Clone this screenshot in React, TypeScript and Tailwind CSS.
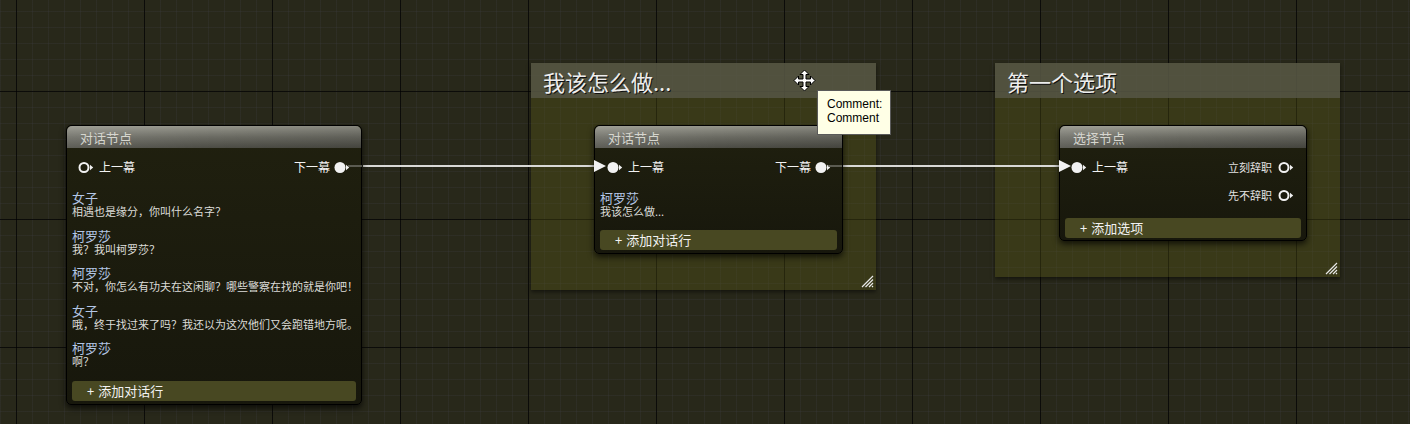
import React from "react";

const CJK = "font-['Noto_Sans_CJK_SC','Noto_Sans',sans-serif]";

function PinIcon({ filled }: { filled: boolean }) {
  return (
    <svg width="16" height="13" viewBox="0 0 16 13" className="shrink-0 block">
      {filled ? (
        <circle cx="6" cy="6.5" r="5.5" fill="#f2f2f2" />
      ) : (
        <circle cx="6" cy="6.5" r="4.5" fill="none" stroke="#f2f2f2" strokeWidth="2" />
      )}
      <path d="M12 3.8 L15.2 6.5 L12 9.2 Z" fill="#f2f2f2" />
    </svg>
  );
}

function NodeHeader({ title }: { title: string }) {
  return (
    <div className="relative h-[22px] rounded-t-[5px] bg-gradient-to-b from-[#95958b] via-[#6a6a62] to-[#4b4b44] flex items-center pl-[13px] overflow-hidden">
      <div className="absolute inset-0 bg-gradient-to-r from-white/10 via-transparent to-black/10" />
      <span className={`relative text-[13px] leading-none text-[#d6d6cf] ${CJK}`}>{title}</span>
    </div>
  );
}

function AddButton({ label }: { label: string }) {
  return (
    <div className={`mx-[5px] h-[20px] rounded-[3px] bg-[#484822] flex items-center pl-[15px] text-[13px] text-[#f2f2f2] ${CJK}`}>
      <span className="mr-[4px]">+</span>
      <span>{label}</span>
    </div>
  );
}

function Entry({ name, line }: { name: string; line: string }) {
  return (
    <div className="flex flex-col">
      <div className={`text-[13px] leading-[14px] text-[#b3c6e6] ${CJK}`}>{name}</div>
      <div className={`text-[11px] leading-[13.5px] text-[#dcdcd8] whitespace-nowrap ${CJK}`}>{line}</div>
    </div>
  );
}

function ResizeGrip() {
  return (
    <svg width="13" height="13" viewBox="0 0 13 13" className="absolute right-[2px] bottom-[2px]">
      <path d="M12 1 L1 12 M12 4.5 L4.5 12 M12 8 L8 12 M12 11 L11 12" stroke="#e8e8e8" strokeWidth="1.2" />
    </svg>
  );
}

function Comment({
  left,
  top,
  height,
  title,
}: {
  left: string;
  top: string;
  height: string;
  title: string;
}) {
  return (
    <div className={`absolute ${left} ${top} ${height} w-[345px] bg-[#5a5a18]/35 shadow-[0_2px_4px_rgba(0,0,0,0.5)]`}>
      <div className="h-[35px] bg-[#585848]/80 flex items-center pl-[12px]">
        <span className={`text-[22px] leading-none text-[#ededed] [text-shadow:1px_1px_0_#111] ${CJK}`}>{title}</span>
      </div>
      <ResizeGrip />
    </div>
  );
}

function MoveCursor() {
  return (
    <svg width="23" height="23" viewBox="0 0 23 23" className="absolute left-[793px] top-[69px]">
      <path
        d="M11.5 1 L16 5.5 L13 5.5 L13 10 L17.5 10 L17.5 7 L22 11.5 L17.5 16 L17.5 13 L13 13 L13 17.5 L16 17.5 L11.5 22 L7 17.5 L10 17.5 L10 13 L5.5 13 L5.5 16 L1 11.5 L5.5 7 L5.5 10 L10 10 L10 5.5 L7 5.5 Z"
        fill="#ffffff"
        stroke="#000000"
        strokeWidth="1"
        strokeLinejoin="miter"
      />
    </svg>
  );
}

export default function App() {
  return (
    <div className="relative w-[1410px] h-[424px] overflow-hidden bg-[#28281a]">
      {/* grid */}
      <div className="absolute inset-0 bg-[image:linear-gradient(to_right,rgba(0,0,0,0.75)_1px,transparent_1px),linear-gradient(to_bottom,rgba(0,0,0,0.75)_1px,transparent_1px),linear-gradient(to_right,rgba(110,110,160,0.08)_1px,transparent_1px),linear-gradient(to_bottom,rgba(110,110,160,0.08)_1px,transparent_1px)] bg-[size:128px_128px,128px_128px,16px_16px,16px_16px] bg-[position:16px_91px,16px_91px,0px_11px,0px_11px]" />

      {/* comments */}
      <Comment left="left-[531px]" top="top-[63px]" height="h-[227px]" title="我该怎么做..." />
      <Comment left="left-[995px]" top="top-[63px]" height="h-[214px]" title="第一个选项" />

      {/* wires */}
      <svg width="1410" height="424" className="absolute inset-0 pointer-events-none">
        <line x1="363" y1="166" x2="595" y2="166" stroke="#d9d9d6" strokeWidth="2" />
        <line x1="843" y1="166" x2="1060" y2="166" stroke="#d9d9d6" strokeWidth="2" />
      </svg>

      {/* Node 1 */}
      <div className="absolute left-[66px] top-[125px] w-[296px] h-[280px] rounded-[5px] border border-black bg-gradient-to-b from-[#20200f] to-[#17170c] shadow-[0_3px_6px_rgba(0,0,0,0.7)] flex flex-col">
        <NodeHeader title="对话节点" />
        <div className={`mt-[11px] h-[16px] flex items-center justify-between pl-[11px] pr-[11px] text-[12px] text-[#f2f2f2] ${CJK}`}>
          <div className="flex items-center gap-[5px]">
            <PinIcon filled={false} />
            <span>上一幕</span>
          </div>
          <div className="flex items-center gap-[4px]">
            <span>下一幕</span>
            <PinIcon filled={true} />
          </div>
        </div>
        <div className="mt-[16px] pl-[5px] flex flex-col gap-[10px]">
          <Entry name="女子" line="相遇也是缘分，你叫什么名字？" />
          <Entry name="柯罗莎" line="我？我叫柯罗莎？" />
          <Entry name="柯罗莎" line="不对，你怎么有功夫在这闲聊？哪些警察在找的就是你吧！" />
          <Entry name="女子" line="哦，终于找过来了吗？我还以为这次他们又会跑错地方呢。" />
          <Entry name="柯罗莎" line="啊？" />
        </div>
        <div className="mt-[12px]">
          <AddButton label="添加对话行" />
        </div>
      </div>

      {/* Node 2 */}
      <div className="absolute left-[594px] top-[125px] w-[249px] h-[129px] rounded-[5px] border border-black bg-gradient-to-b from-[#20200f] to-[#17170c] shadow-[0_3px_6px_rgba(0,0,0,0.7)] flex flex-col">
        <NodeHeader title="对话节点" />
        <div className={`mt-[11px] h-[16px] flex items-center justify-between pl-[12px] pr-[11px] text-[12px] text-[#f2f2f2] ${CJK}`}>
          <div className="flex items-center gap-[5px]">
            <PinIcon filled={true} />
            <span>上一幕</span>
          </div>
          <div className="flex items-center gap-[4px]">
            <span>下一幕</span>
            <PinIcon filled={true} />
          </div>
        </div>
        <div className="mt-[16px] pl-[5px] flex flex-col">
          <Entry name="柯罗莎" line="我该怎么做..." />
        </div>
        <div className="mt-[11px]">
          <AddButton label="添加对话行" />
        </div>
      </div>

      {/* Node 3 */}
      <div className="absolute left-[1059px] top-[125px] w-[248px] h-[116px] rounded-[5px] border border-black bg-gradient-to-b from-[#20200f] to-[#17170c] shadow-[0_3px_6px_rgba(0,0,0,0.7)] flex flex-col">
        <NodeHeader title="选择节点" />
        <div className={`mt-[11px] h-[16px] flex items-center justify-between pl-[11px] pr-[12px] text-[12px] text-[#f2f2f2] ${CJK}`}>
          <div className="flex items-center gap-[5px]">
            <PinIcon filled={true} />
            <span>上一幕</span>
          </div>
          <div className="flex items-center gap-[6px] text-[11px] text-[#e2e2e2]">
            <span>立刻辞职</span>
            <PinIcon filled={false} />
          </div>
        </div>
        <div className={`mt-[12px] h-[16px] flex items-center justify-end pr-[12px] text-[11px] text-[#e2e2e2] ${CJK}`}>
          <div className="flex items-center gap-[6px]">
            <span>先不辞职</span>
            <PinIcon filled={false} />
          </div>
        </div>
        <div className="mt-[15px]">
          <AddButton label="添加选项" />
        </div>
      </div>

      {/* wire ends over nodes */}
      <svg width="1410" height="424" className="absolute inset-0 pointer-events-none">
        <line x1="348" y1="166" x2="362" y2="166" stroke="#707068" strokeWidth="1.5" />
        <line x1="828" y1="166" x2="842" y2="166" stroke="#707068" strokeWidth="1.5" />
        <path d="M594 160 L606 166 L594 172 Z" fill="#f2f2f2" />
        <path d="M1059 160 L1071 166 L1059 172 Z" fill="#f2f2f2" />
      </svg>

      {/* cursor + tooltip */}
      <MoveCursor />
      <div className="absolute left-[817px] top-[90px] w-[74px] h-[45px] bg-[#ffffe6] border border-[#5a5a5a] pl-[9px] pt-[6px] text-[12px] leading-[14px] text-black font-['Liberation_Sans',Arial,sans-serif]">
        <div>Comment:</div>
        <div>Comment</div>
      </div>
    </div>
  );
}
